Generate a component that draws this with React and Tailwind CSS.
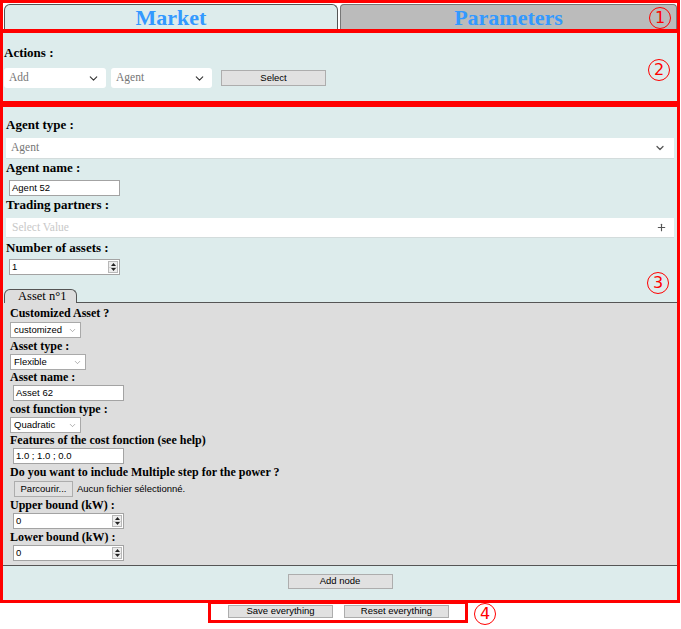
import { ChevronDown, Plus } from 'lucide-react';

const teal = 'bg-[#ddecec]';
const sans = "font-['Liberation_Sans',Arial,sans-serif]";

function Circled({ children, className = '' }) {
  return (
    <span
      className={`flex h-[22px] w-[22px] items-center justify-center rounded-full border border-[#ff0000] font-['DejaVu_Sans',sans-serif] text-[16px] leading-none text-[#ff0000] ${className}`}
    >
      {children}
    </span>
  );
}

function Label({ children, className = '' }) {
  return <div className={`h-[16px] text-[13px] font-bold leading-[16px] ${className}`}>{children}</div>;
}

function SmallLabel({ children, h = 'h-[16px] leading-[16px]' }) {
  return <div className={`${h} text-[12px] font-bold`}>{children}</div>;
}

function Box({ value, className = '', spinner = false }) {
  return (
    <div
      className={`flex h-[16px] w-[111px] items-center justify-between border border-[#a3a3a3] bg-white pl-[2px] pr-px text-[9.5px] ${sans} ${className}`}
    >
      <span>{value}</span>
      {spinner && <Spinner />}
    </div>
  );
}

function Spinner() {
  return (
    <div className="flex h-[12px] w-[10px] flex-col border border-[#b8b8b8] bg-[#ededed]">
      <div className="flex flex-1 items-center justify-center border-b border-[#cfcfcf]">
        <svg width="5" height="3" viewBox="0 0 5 3"><path d="M2.5 0L5 3H0z" fill="#222" /></svg>
      </div>
      <div className="flex flex-1 items-center justify-center">
        <svg width="5" height="3" viewBox="0 0 5 3"><path d="M0 0h5L2.5 3z" fill="#222" /></svg>
      </div>
    </div>
  );
}

function MiniSelect({ value, w }) {
  return (
    <div
      className={`flex h-[16px] ${w} items-center justify-between border border-[#a9a9a9] bg-white pl-[3px] pr-[3px] text-[9.5px] ${sans}`}
    >
      <span>{value}</span>
      <ChevronDown size={9} strokeWidth={1.5} color="#777" />
    </div>
  );
}

function Btn({ children, className = '' }) {
  return (
    <div
      className={`flex items-center justify-center border border-[#adadad] bg-[#e1e1e1] text-[9.5px] ${sans} ${className}`}
    >
      {children}
    </div>
  );
}

export default function App() {
  return (
    <div className="relative min-h-[629px] w-[680px] bg-white font-['Liberation_Serif',serif] text-black">
      {/* 1: tabs */}
      <div className="flex h-[31px] items-end border-[3px] border-b-2 border-[#ff0000] pl-px">
        <div className={`h-[25px] w-[334px] rounded-t-[6px] border border-b-0 border-[#555] ${teal} pt-px text-center text-[22px] font-bold leading-[24px] text-[#3399ff]`}>
          Market
        </div>
        <div className="ml-[2px] h-[25px] flex-1 rounded-t-[4px] border border-b-0 border-[#777] bg-[#bbbbbb] pt-px text-center text-[22px] font-bold leading-[24px] text-[#3399ff]">
          Parameters
        </div>
      </div>

      {/* 2: actions */}
      <div className={`h-[73px] border-[3px] border-t-2 border-[#ff0000] ${teal}`}>
        <Label className="ml-px mt-[12px]">Actions :</Label>
        <div className="ml-px mt-[7px] flex items-center">
          <div className="flex h-[20px] w-[102px] items-center justify-between rounded-[3px] bg-white pl-[5px] pr-[6px] text-[11.5px] text-[#757575]">
            <span>Add</span>
            <ChevronDown size={13} strokeWidth={2} color="#333" />
          </div>
          <div className="ml-[5px] flex h-[20px] w-[101px] items-center justify-between rounded-[3px] bg-white pl-[5px] pr-[6px] text-[11.5px] text-[#757575]">
            <span>Agent</span>
            <ChevronDown size={13} strokeWidth={2} color="#333" />
          </div>
          <Btn className="ml-[9px] h-[16px] w-[105px]">Select</Btn>
        </div>
      </div>

      {/* 3: agent form */}
      <div className={`flex h-[499px] flex-col border-[3px] border-[#ff0000] ${teal}`}>
        <Label className="ml-[3px] mt-[10px]">Agent type :</Label>
        <div className="mx-[3px] mt-[5px] flex h-[21px] items-center justify-between border-b border-[#d3dcdc] bg-white pl-[5px] pr-[8px] text-[11.5px] text-[#757575]">
          <span>Agent</span>
          <ChevronDown size={12} strokeWidth={2.5} color="#555" />
        </div>
        <Label className="ml-[3px] mt-px">Agent name :</Label>
        <Box value="Agent 52" className="ml-[6px] mt-[4px]" />
        <Label className="ml-[3px] mt-px">Trading partners :</Label>
        <div className="mx-[3px] mt-[5px] flex h-[20px] items-center justify-between border-b border-[#d3dcdc] bg-white pl-[6px] pr-[7px] text-[11.5px] text-[#c8c8c8]">
          <span>Select Value</span>
          <Plus size={11} strokeWidth={2.5} color="#555" />
        </div>
        <Label className="ml-[3px] mt-[2px]">Number of assets :</Label>
        <Box value="1" spinner className="ml-[6px] mt-[3px]" />

        <div className="mt-[14px] flex h-[14px] items-end">
          <div className="ml-px h-[14px] w-[73px] rounded-t-[6px] border border-b-0 border-[#555] bg-[#dddddd] pl-[13px] text-[12.5px] leading-[13px]">
            Asset n°1
          </div>
          <div className="flex-1 border-b border-[#555]" />
        </div>

        <div className="flex flex-col items-start border-b border-[#555] bg-[#dddddd] pb-[4px] pl-[7px] pt-[2px]">
          <SmallLabel>Customized Asset ?</SmallLabel>
          <div className="mt-px"><MiniSelect value="customized" w="w-[71px]" /></div>
          <SmallLabel>Asset type :</SmallLabel>
          <MiniSelect value="Flexible" w="w-[76px]" />
          <SmallLabel h="h-[15px] leading-[15px]">Asset name :</SmallLabel>
          <Box value="Asset 62" className="ml-[3px]" />
          <SmallLabel>cost function type :</SmallLabel>
          <MiniSelect value="Quadratic" w="w-[71px]" />
          <SmallLabel h="h-[15px] leading-[15px]">Features of the cost fonction (see help)</SmallLabel>
          <Box value="1.0 ; 1.0 ; 0.0" className="ml-[3px]" />
          <SmallLabel>Do you want to include Multiple step for the power ?</SmallLabel>
          <div className={`ml-[4px] mt-px flex h-[16px] items-center text-[9.5px] ${sans}`}>
            <Btn className="h-[16px] w-[59px]">Parcourir...</Btn>
            <span className="ml-[4px]">Aucun fichier sélectionné.</span>
          </div>
          <SmallLabel>Upper bound (kW) :</SmallLabel>
          <Box value="0" spinner className="ml-[3px]" />
          <SmallLabel>Lower bound (kW) :</SmallLabel>
          <Box value="0" spinner className="ml-[3px]" />
        </div>

        <div className="flex flex-1 flex-col items-center">
          <Btn className="mt-[8px] h-[15px] w-[105px]">Add node</Btn>
        </div>
      </div>

      {/* 4: save / reset */}
      <div className="-mt-[2px] flex items-start pl-[208px]">
        <div className="flex h-[22px] w-[260px] items-start border-[3px] border-[#ff0000]">
          <Btn className="ml-[17px] mt-px h-[13px] w-[105px]">Save everything</Btn>
          <Btn className="ml-[11px] mt-px h-[13px] w-[105px]">Reset everything</Btn>
        </div>
        <Circled className="ml-[6px] mt-[2px]">4</Circled>
      </div>

      <Circled className="absolute left-[649px] top-[7px]">1</Circled>
      <Circled className="absolute left-[648px] top-[59px]">2</Circled>
      <Circled className="absolute left-[647px] top-[272px]">3</Circled>
    </div>
  );
}
